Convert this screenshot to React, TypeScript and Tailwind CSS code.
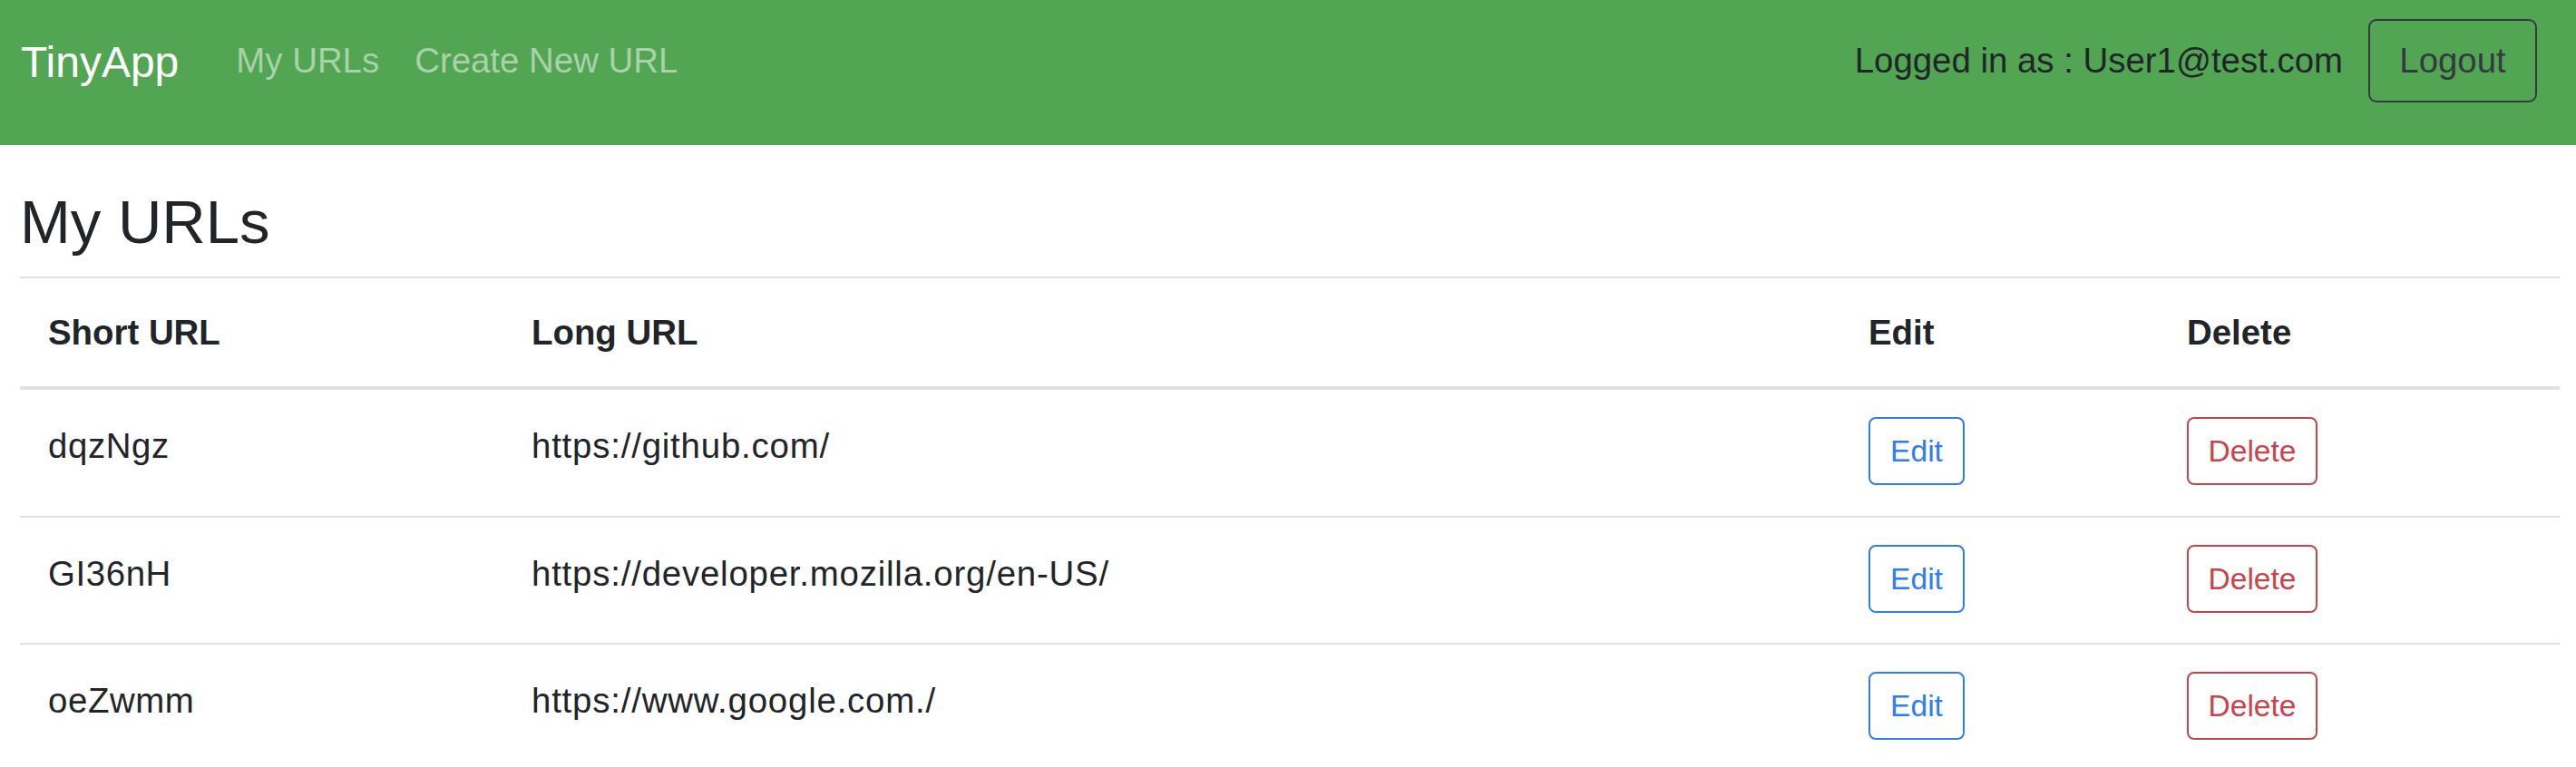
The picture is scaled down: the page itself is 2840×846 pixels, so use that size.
import React from "react";

type UrlRow = {
    short: string;
    long: string;
};

const urls: UrlRow[] = [
    { short: "dqzNgz", long: "https://github.com/" },
    { short: "GI36nH", long: "https://developer.mozilla.org/en-US/" },
    { short: "oeZwmm", long: "https://www.google.com./" },
];

const Navbar = () => {
    return (
        <nav className="flex h-[160px] items-start bg-[#52a552] pl-[23px] pr-[43px] pt-[21px]">
            <a href="#" className="mt-[12px] text-[48px] leading-[72px] text-white">
                TinyApp
            </a>
            <div className="ml-[63px] mt-[17px] flex gap-[39px] text-[38.4px] leading-[57.6px] text-[#a9d2a9]">
                <a href="#">My URLs</a>
                <a href="#">Create New URL</a>
            </div>
            <span className="ml-auto mt-[17px] text-[38.4px] leading-[57.6px] text-[#212529]">
                Logged in as : User1@test.com
            </span>
            <button className="ml-[28px] flex h-[92px] w-[186px] items-center justify-center rounded-[9px] border-2 border-[#343a40] text-[38.4px] leading-[57.6px] text-[#343a40]">
                Logout
            </button>
        </nav>
    );
};

const cols = "grid grid-cols-[533px_1474px_351px_442px]";

const UrlTable = () => {
    return (
        <div className="w-[2800px]">
            <div className={`${cols} h-[125px] border-t-2 border-b-4 border-[#dee2e6] text-[38.4px] font-bold leading-[57.6px]`}>
                <div className="pl-[31px] pt-[31px]">Short URL</div>
                <div className="pl-[31px] pt-[31px]">Long URL</div>
                <div className="pl-[31px] pt-[31px]">Edit</div>
                <div className="pl-[31px] pt-[31px]">Delete</div>
            </div>
            {urls.map((url, i) => (
                <div
                    key={url.short}
                    className={`${cols} ${i === 0 ? "h-[139px]" : "h-[140px] border-t-2 border-[#dee2e6]"} text-[38.4px] leading-[57.6px]`}
                >
                    <div className="pl-[31px] pt-[33px] tracking-[0.6px]">{url.short}</div>
                    <div className="pl-[31px] pt-[33px] tracking-[0.8px]">{url.long}</div>
                    <div className="pl-[31px] pt-[30px]">
                        <button className="flex h-[75px] w-[106px] items-center justify-center rounded-[8px] border-2 border-[#2f7df6] text-[33.6px] leading-[50px] text-[#2f7df6]">
                            Edit
                        </button>
                    </div>
                    <div className="pl-[31px] pt-[30px]">
                        <button className="flex h-[75px] w-[144px] items-center justify-center rounded-[8px] border-2 border-[#c8444a] text-[33.6px] leading-[50px] text-[#c8444a]">
                            Delete
                        </button>
                    </div>
                </div>
            ))}
        </div>
    );
};

export default function App() {
    return (
        <div className="min-h-screen bg-white font-['Liberation_Sans',Arial,sans-serif] text-[#212529]">
            <Navbar />
            <main className="pl-[22px] pr-[18px]">
                <h1 className="mb-[20px] mt-[45px] text-[67px] font-normal leading-[80px]">My URLs</h1>
                <UrlTable />
            </main>
        </div>
    );
}
